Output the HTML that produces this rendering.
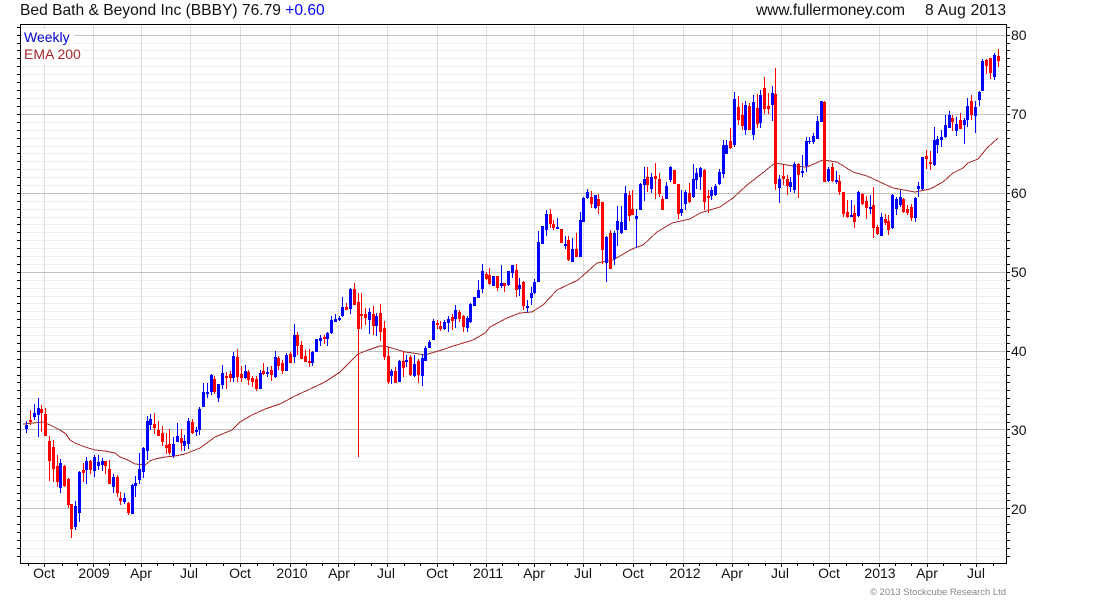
<!DOCTYPE html>
<html><head><meta charset="utf-8"><title>BBBY</title>
<style>html,body{margin:0;padding:0;background:#fff;width:1100px;height:600px;overflow:hidden}svg{display:block;font-family:"Liberation Sans",Arial,sans-serif}</style>
</head><body>
<svg width="1100" height="600" viewBox="0 0 1100 600" xmlns="http://www.w3.org/2000/svg">
<rect width="1100" height="600" fill="#fff"/>
<g shape-rendering="crispEdges" fill="none">
<path stroke="#eeeeee" d="M20 27.5H1006M20 43.5H1006M20 50.5H1006M20 58.5H1006M20 66.5H1006M20 74.5H1006M20 82.5H1006M20 90.5H1006M20 98.5H1006M20 106.5H1006M20 122.5H1006M20 130.5H1006M20 138.5H1006M20 146.5H1006M20 153.5H1006M20 161.5H1006M20 169.5H1006M20 177.5H1006M20 185.5H1006M20 201.5H1006M20 209.5H1006M20 217.5H1006M20 224.5H1006M20 232.5H1006M20 240.5H1006M20 248.5H1006M20 256.5H1006M20 264.5H1006M20 280.5H1006M20 288.5H1006M20 296.5H1006M20 303.5H1006M20 311.5H1006M20 319.5H1006M20 327.5H1006M20 335.5H1006M20 343.5H1006M20 359.5H1006M20 367.5H1006M20 375.5H1006M20 382.5H1006M20 390.5H1006M20 398.5H1006M20 406.5H1006M20 414.5H1006M20 422.5H1006M20 437.5H1006M20 445.5H1006M20 453.5H1006M20 461.5H1006M20 469.5H1006M20 477.5H1006M20 485.5H1006M20 493.5H1006M20 500.5H1006M20 516.5H1006M20 524.5H1006M20 532.5H1006M20 540.5H1006M20 548.5H1006M20 556.5H1006"/>
<path stroke="#dddddd" d="M44.5 24V563M93.5 24V563M141.5 24V563M190.5 24V563M240.5 24V563M290.5 24V563M338.5 24V563M387.5 24V563M437.5 24V563M486.5 24V563M534.5 24V563M583.5 24V563M633.5 24V563M683.5 24V563M732.5 24V563M781.5 24V563M829.5 24V563M879.5 24V563M927.5 24V563M976.5 24V563"/>
<path stroke="#c0c0c0" d="M20 35.5H1006M20 114.5H1006M20 193.5H1006M20 272.5H1006M20 351.5H1006M20 429.5H1006M20 508.5H1006"/>
<rect x="22" y="29" width="52" height="17" fill="#fff"/>
<rect x="22" y="47" width="60" height="17" fill="#fff"/>
</g>
<g shape-rendering="crispEdges" fill="none">
<path stroke="#a52a2a" d="M23 424L43 422L50 425L60 430L66 434L70 440L75 443L85 447L95 450L105 451L115 453L120 457L128 460L135 464L145 465L150 461L155 459L165 457L175 456L185 454L200 448L215 437L232 430L240 422L252 415L265 409L280 404L295 396L310 389L325 382L340 372L350 362L358 354L368 350L380 346L385 346L395 349L405 352L413 353L425 355L435 352L445 349L450 347L473 340L485 333L490 327L507 318L520 313L532 312L543 305L557 290L578 280L597 263L613 260L632 249L643 245L657 232L672 223L690 219L700 213L720 207L733 198L747 185L760 175L775 163L793 166L807 167L823 160L837 162L853 172L867 176L880 182L893 188L915 192L930 189L943 182L953 173L963 168L968 163L978 159L987 148L998 138"/>
<path stroke="#0000ff" d="M26.5 421V433M34.5 404V420M38.5 398V437M60.5 459V493M75.5 501V530M79.5 471V522M86.5 457V484M94.5 455V477M98.5 455V470M102.5 458V471M113.5 474V493M124.5 493V504M132.5 484V514M135.5 476V497M139.5 453V484M143.5 447V478M147.5 416V460M150.5 414V430M173.5 437V458M177.5 423V442M184.5 435V451M188.5 418V449M196.5 427V436M199.5 407V435M203.5 383V407M207.5 383V398M211.5 374V395M218.5 384V402M222.5 365V389M233.5 352V382M245.5 365V379M260.5 370V389M267.5 367V377M275.5 351V378M286.5 353V371M294.5 324V363M312.5 351V366M316.5 339V352M320.5 335V346M327.5 332V346M331.5 316V334M335.5 314V322M339.5 316V321M342.5 297V317M350.5 288V314M369.5 308V334M376.5 313V336M391.5 369V384M399.5 360V382M406.5 355V367M414.5 355V377M422.5 354V386M425.5 346V361M429.5 340V348M433.5 319V340M444.5 320V330M448.5 316V332M455.5 305V328M467.5 316V332M470.5 303V323M474.5 297V306M478.5 280V298M482.5 264V293M493.5 276V286M501.5 265V288M508.5 271V286M512.5 265V278M519.5 278V296M527.5 300V312M531.5 287V305M534.5 279V294M538.5 231V282M542.5 226V244M546.5 210V236M557.5 218V229M565.5 236V249M572.5 238V262M580.5 212V257M583.5 197V222M587.5 189V199M595.5 195V209M606.5 236V282M614.5 231V265M617.5 206V246M621.5 206V234M625.5 186V230M636.5 209V248M640.5 183V210M644.5 167V201M651.5 173V193M666.5 182V199M670.5 166V182M681.5 190V216M685.5 190V210M693.5 164V198M696.5 168V189M700.5 167V190M711.5 187V200M715.5 184V196M719.5 169V185M723.5 140V178M726.5 140V154M734.5 92V147M745.5 101V135M753.5 95V140M760.5 90V128M772.5 86V121M779.5 175V203M790.5 177V192M794.5 162V193M802.5 155V177M806.5 137V172M809.5 137V144M813.5 133V144M817.5 116V139M821.5 101V122M828.5 167V182M836.5 171V184M851.5 200V217M858.5 191V217M870.5 195V214M881.5 213V236M892.5 194V229M896.5 197V215M900.5 190V207M915.5 197V222M918.5 182V197M922.5 157V190M934.5 127V166M937.5 136V153M941.5 130V147M945.5 115V138M949.5 111V128M956.5 117V136M964.5 118V144M967.5 98V127M975.5 101V133M979.5 91V106M982.5 59V91M994.5 53V80"/>
<path stroke="#0000ff" stroke-width="3" d="M26.5 425V429M34.5 413V417M38.5 408V415M60.5 463V488M75.5 506V527M79.5 472V513M86.5 461V470M94.5 457V471M98.5 462V466M102.5 461V465M113.5 477V487M124.5 498V502M132.5 485V514M135.5 483V486M139.5 469V480M143.5 448V472M147.5 421V451M150.5 419V425M173.5 444V456M177.5 436V442M184.5 441V446M188.5 421V444M196.5 430V432M199.5 409V430M203.5 392V407M207.5 392V394M211.5 375V392M218.5 384V398M222.5 373V385M233.5 356V378M245.5 371V378M260.5 373V389M267.5 372V374M275.5 357V377M286.5 355V371M294.5 335V357M312.5 352V363M316.5 339V352M320.5 338V341M327.5 333V339M331.5 320V333M335.5 319V322M339.5 318V320M342.5 307V316M350.5 289V309M369.5 312V320M376.5 316V326M391.5 371V376M399.5 361V382M406.5 360V362M414.5 364V376M422.5 358V376M425.5 348V361M429.5 342V348M433.5 321V340M444.5 322V329M448.5 319V323M455.5 310V319M467.5 318V328M470.5 304V322M474.5 297V306M478.5 290V298M482.5 271V289M493.5 276V286M501.5 283V286M508.5 271V285M512.5 265V273M519.5 285V289M527.5 306V308M531.5 293V298M534.5 282V293M538.5 242V282M542.5 226V244M546.5 214V230M557.5 227V229M565.5 244V246M572.5 249V262M580.5 220V257M583.5 198V222M587.5 192V198M595.5 195V208M606.5 237V263M614.5 233V259M617.5 221V230M621.5 222V233M625.5 193V230M636.5 216V219M640.5 184V210M644.5 179V185M651.5 177V189M666.5 186V199M670.5 167V180M681.5 209V213M685.5 192V204M693.5 179V197M696.5 173V180M700.5 168V177M711.5 190V196M715.5 186V195M719.5 172V184M723.5 145V174M726.5 145V154M734.5 99V145M745.5 105V130M753.5 102V135M760.5 95V123M772.5 93V105M779.5 179V188M790.5 182V187M794.5 164V190M802.5 171V173M806.5 141V166M809.5 141V142M813.5 136V142M817.5 121V139M821.5 101V122M828.5 169V181M836.5 180V182M851.5 215V217M858.5 192V216M870.5 207V209M881.5 217V236M892.5 195V228M896.5 199V209M900.5 197V205M915.5 198V218M918.5 186V189M922.5 157V189M934.5 140V165M937.5 139V145M941.5 137V140M945.5 125V137M949.5 115V128M956.5 124V131M964.5 120V125M967.5 106V120M975.5 107V116M979.5 92V100M982.5 61V91M994.5 55V77"/>
<path stroke="#ff0000" d="M30.5 410V425M41.5 405V432M45.5 408V436M49.5 436V481M53.5 440V482M57.5 455V487M64.5 465V487M68.5 478V508M71.5 504V538M83.5 463V482M90.5 460V474M105.5 461V474M109.5 460V484M117.5 475V497M120.5 492V505M128.5 502V515M154.5 413V434M158.5 421V436M162.5 426V446M166.5 433V454M169.5 429V455M181.5 429V451M192.5 419V434M214.5 376V394M226.5 372V389M230.5 371V382M237.5 349V382M241.5 366V382M248.5 370V385M252.5 376V387M256.5 376V391M263.5 363V375M271.5 366V381M278.5 356V370M282.5 360V374M290.5 352V363M297.5 332V355M301.5 341V359M305.5 350V362M309.5 349V367M324.5 335V344M346.5 303V310M354.5 283V305M358.5 293V457M361.5 293V329M365.5 308V325M373.5 306V335M380.5 304V341M384.5 321V360M388.5 347V384M395.5 367V383M403.5 351V377M410.5 355V376M418.5 359V383M437.5 320V329M440.5 321V331M452.5 314V330M459.5 310V322M463.5 315V332M486.5 272V280M489.5 268V285M497.5 276V291M504.5 283V292M516.5 264V297M523.5 281V310M550.5 209V228M553.5 220V230M561.5 229V243M568.5 236V261M576.5 233V257M591.5 191V208M598.5 194V214M602.5 202V264M610.5 230V269M629.5 191V221M632.5 190V215M647.5 167V192M655.5 163V199M659.5 173V197M662.5 196V210M674.5 170V184M678.5 184V219M689.5 183V203M704.5 169V210M708.5 190V213M730.5 128V149M738.5 96V125M742.5 103V130M749.5 103V130M757.5 94V128M764.5 77V114M768.5 93V114M775.5 68V190M783.5 165V185M787.5 175V195M798.5 163V198M824.5 101V182M832.5 163V182M839.5 175V195M843.5 192V217M847.5 200V218M854.5 205V228M862.5 193V205M866.5 196V219M873.5 187V238M877.5 225V235M885.5 214V225M888.5 215V235M903.5 198V213M907.5 205V215M911.5 204V221M926.5 150V169M930.5 151V170M952.5 115V131M960.5 113V129M971.5 95V120M986.5 59V74M990.5 58V79M998.5 49V67"/>
<path stroke="#ff0000" stroke-width="3" d="M30.5 420V422M41.5 409V413M45.5 414V436M49.5 441V461M53.5 447V469M57.5 466V482M64.5 466V486M68.5 479V505M71.5 504V529M83.5 470V473M90.5 461V470M105.5 461V466M109.5 469V484M117.5 477V493M120.5 498V501M128.5 503V513M154.5 424V428M158.5 430V436M162.5 433V442M166.5 445V448M169.5 444V453M181.5 438V443M192.5 422V433M214.5 379V392M226.5 376V378M230.5 374V378M237.5 357V377M241.5 374V378M248.5 372V380M252.5 378V382M256.5 379V389M263.5 371V374M271.5 370V375M278.5 358V366M282.5 363V371M290.5 354V363M297.5 335V346M301.5 345V359M305.5 356V362M309.5 361V363M324.5 337V339M346.5 307V310M354.5 289V305M358.5 302V329M361.5 314V316M365.5 314V318M373.5 314V326M380.5 313V332M384.5 328V357M388.5 356V382M395.5 371V383M403.5 361V368M410.5 357V375M418.5 361V375M437.5 323V325M440.5 326V329M452.5 317V321M459.5 312V319M463.5 316V327M486.5 274V279M489.5 275V284M497.5 276V288M504.5 283V286M516.5 270V290M523.5 282V306M550.5 214V224M553.5 224V228M561.5 229V243M568.5 240V260M576.5 249V257M591.5 197V204M598.5 199V206M602.5 202V250M610.5 233V269M629.5 195V216M632.5 209V215M647.5 177V185M655.5 176V179M659.5 179V194M662.5 199V210M674.5 170V184M678.5 184V214M689.5 193V202M704.5 170V202M708.5 196V198M730.5 141V148M738.5 107V120M742.5 115V126M749.5 106V130M757.5 108V124M764.5 88V109M768.5 106V109M775.5 94V184M783.5 176V179M787.5 179V186M798.5 164V175M824.5 102V182M832.5 167V181M839.5 181V192M843.5 192V214M847.5 212V217M854.5 213V222M862.5 194V204M866.5 201V208M873.5 205V228M877.5 227V234M885.5 219V223M888.5 221V230M903.5 199V212M907.5 209V213M911.5 207V218M926.5 156V159M930.5 162V164M952.5 118V122M960.5 120V129M971.5 101V115M986.5 60V66M990.5 58V73M998.5 56V61"/>
<path stroke="#000" d="M20.5 24V564M20 24.5H1006M1006.5 24V564M20 563.5H1007"/>
<path stroke="#000" d="M17 27.5H20M17 35.5H20M17 43.5H20M17 50.5H20M17 58.5H20M17 66.5H20M17 74.5H20M17 82.5H20M17 90.5H20M17 98.5H20M17 106.5H20M17 114.5H20M17 122.5H20M17 130.5H20M17 138.5H20M17 146.5H20M17 153.5H20M17 161.5H20M17 169.5H20M17 177.5H20M17 185.5H20M17 193.5H20M17 201.5H20M17 209.5H20M17 217.5H20M17 224.5H20M17 232.5H20M17 240.5H20M17 248.5H20M17 256.5H20M17 264.5H20M17 272.5H20M17 280.5H20M17 288.5H20M17 296.5H20M17 303.5H20M17 311.5H20M17 319.5H20M17 327.5H20M17 335.5H20M17 343.5H20M17 351.5H20M17 359.5H20M17 367.5H20M17 375.5H20M17 382.5H20M17 390.5H20M17 398.5H20M17 406.5H20M17 414.5H20M17 422.5H20M17 429.5H20M17 437.5H20M17 445.5H20M17 453.5H20M17 461.5H20M17 469.5H20M17 477.5H20M17 485.5H20M17 493.5H20M17 500.5H20M17 508.5H20M17 516.5H20M17 524.5H20M17 532.5H20M17 540.5H20M17 548.5H20M17 556.5H20"/>
<path stroke="#000" d="M1007 27.5H1010M1007 35.5H1010M1007 43.5H1010M1007 50.5H1010M1007 58.5H1010M1007 66.5H1010M1007 74.5H1010M1007 82.5H1010M1007 90.5H1010M1007 98.5H1010M1007 106.5H1010M1007 114.5H1010M1007 122.5H1010M1007 130.5H1010M1007 138.5H1010M1007 146.5H1010M1007 153.5H1010M1007 161.5H1010M1007 169.5H1010M1007 177.5H1010M1007 185.5H1010M1007 193.5H1010M1007 201.5H1010M1007 209.5H1010M1007 217.5H1010M1007 224.5H1010M1007 232.5H1010M1007 240.5H1010M1007 248.5H1010M1007 256.5H1010M1007 264.5H1010M1007 272.5H1010M1007 280.5H1010M1007 288.5H1010M1007 296.5H1010M1007 303.5H1010M1007 311.5H1010M1007 319.5H1010M1007 327.5H1010M1007 335.5H1010M1007 343.5H1010M1007 351.5H1010M1007 359.5H1010M1007 367.5H1010M1007 375.5H1010M1007 382.5H1010M1007 390.5H1010M1007 398.5H1010M1007 406.5H1010M1007 414.5H1010M1007 422.5H1010M1007 429.5H1010M1007 437.5H1010M1007 445.5H1010M1007 453.5H1010M1007 461.5H1010M1007 469.5H1010M1007 477.5H1010M1007 485.5H1010M1007 493.5H1010M1007 500.5H1010M1007 508.5H1010M1007 516.5H1010M1007 524.5H1010M1007 532.5H1010M1007 540.5H1010M1007 548.5H1010M1007 556.5H1010"/>
<path stroke="#000" d="M28.5 564V566M44.5 564V567M62.5 564V566M77.5 564V566M93.5 564V567M109.5 564V566M125.5 564V566M141.5 564V567M157.5 564V566M173.5 564V566M190.5 564V567M206.5 564V566M223.5 564V566M240.5 564V567M257.5 564V566M273.5 564V566M290.5 564V567M306.5 564V566M322.5 564V566M338.5 564V567M354.5 564V566M371.5 564V566M387.5 564V567M404.5 564V566M420.5 564V566M437.5 564V567M453.5 564V566M470.5 564V566M486.5 564V567M502.5 564V566M518.5 564V566M534.5 564V567M550.5 564V566M567.5 564V566M583.5 564V567M600.5 564V566M616.5 564V566M633.5 564V567M650.5 564V566M666.5 564V566M683.5 564V567M699.5 564V566M716.5 564V566M732.5 564V567M748.5 564V566M765.5 564V566M781.5 564V567M797.5 564V566M813.5 564V566M829.5 564V567M846.5 564V566M862.5 564V566M879.5 564V567M895.5 564V566M911.5 564V566M927.5 564V567M943.5 564V566M960.5 564V566M976.5 564V567M993.5 564V566"/>
</g>
<text x="20" y="15" font-size="15.6" fill="#111">Bed Bath &amp; Beyond Inc (BBBY) 76.79 <tspan fill="#0000ff">+0.60</tspan></text>
<text x="756" y="15" font-size="15.6" fill="#111" textLength="149" lengthAdjust="spacing">www.fullermoney.com</text>
<text x="925" y="15" font-size="15.6" fill="#111" textLength="81" lengthAdjust="spacing">8 Aug 2013</text>
<text x="24" y="42" font-size="14" fill="#0000cd">Weekly</text>
<text x="24" y="59" font-size="14" fill="#a52a2a">EMA 200</text>
<g font-size="14" fill="#111">
<text x="1011" y="40">80</text><text x="1011" y="119">70</text><text x="1011" y="198">60</text><text x="1011" y="277">50</text><text x="1011" y="356">40</text><text x="1011" y="435">30</text><text x="1011" y="514">20</text>
</g>
<g font-size="14" fill="#111" text-anchor="middle">
<text x="44" y="578">Oct</text><text x="94" y="578">2009</text><text x="141" y="578">Apr</text><text x="189" y="578">Jul</text><text x="240" y="578">Oct</text><text x="292" y="578">2010</text><text x="339" y="578">Apr</text><text x="386" y="578">Jul</text><text x="437" y="578">Oct</text><text x="488" y="578">2011</text><text x="534" y="578">Apr</text><text x="583" y="578">Jul</text><text x="633" y="578">Oct</text><text x="685" y="578">2012</text><text x="732" y="578">Apr</text><text x="780" y="578">Jul</text><text x="829" y="578">Oct</text><text x="880" y="578">2013</text><text x="927" y="578">Apr</text><text x="976" y="578">Jul</text>
</g>
<text x="870" y="595" font-size="9.5" fill="#888" textLength="136" lengthAdjust="spacing">© 2013 Stockcube Research Ltd</text>
</svg>
</body></html>
